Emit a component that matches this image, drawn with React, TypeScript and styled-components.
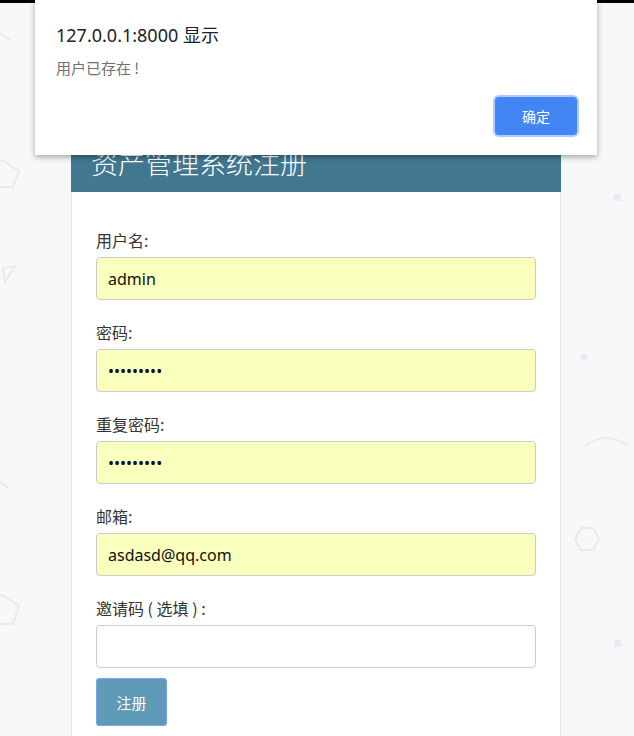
import React from 'react';
import styled, { createGlobalStyle } from 'styled-components';

const GlobalStyle = createGlobalStyle`
  html, body {
    margin: 0;
    padding: 0;
    background: #f7f8fa;
    font-family: "Noto Sans", "Noto Sans CJK SC", sans-serif;
  }
  * { box-sizing: border-box; }
`;

////////////////////// styled [START]
const Page = styled.div`
  position: relative;
  min-height: 736px;
  overflow: hidden;
`;

const TopBar = styled.div`
  height: 3px;
  background: #000;
`;

const Decor = styled.svg`
  position: absolute;
  inset: 0;
  width: 634px;
  height: 736px;
  pointer-events: none;
`;

const Main = styled.div`
  position: relative;
  display: flex;
  justify-content: center;
  padding: 117px 2px 0 0;
`;

const Card = styled.div`
  width: 490px;
  background: #fff;
`;

const CardHeader = styled.div`
  background: #41778f;
  padding: 27px 20px 13px;
`;

const Title = styled.h2`
  margin: 0;
  font-family: "Noto Sans CJK SC", sans-serif;
  font-size: 27px;
  font-weight: 300;
  line-height: 32px;
  color: #fff;
`;

const CardBody = styled.form`
  padding: 37px 24px 20px 24px;
  border: 1px solid #e6e8eb;
  border-top: none;
`;

const Group = styled.div`
  display: flex;
  flex-direction: column;
  margin-bottom: 21px;

  &:last-of-type {
    margin-bottom: 10px;
  }
`;

const Label = styled.label`
  font-family: "Noto Sans CJK SC", sans-serif;
  font-size: 16px;
  line-height: 22px;
  color: #333;
  margin-bottom: 6px;
`;

const Input = styled.input<{ $filled?: boolean }>`
  height: 43px;
  width: 100%;
  padding: 0 11px;
  border: 1px solid #ccc;
  border-radius: 4px;
  background: ${({ $filled }) => ($filled ? '#faffbd' : '#fff')};
  font-family: "Noto Sans", sans-serif;
  font-size: 16px;
  color: #111;
  outline: none;
`;

const Submit = styled.button`
  width: 71px;
  height: 48px;
  border: 1px solid #7aa6ee;
  border-radius: 3px;
  background: #5f9ab6;
  color: #fff;
  font-family: "Noto Sans CJK SC", sans-serif;
  font-size: 15px;
  cursor: pointer;
`;

const Dialog = styled.div`
  position: absolute;
  top: 0;
  left: 35px;
  width: 562px;
  height: 155px;
  background: #fff;
  box-shadow: 0 2px 6px rgba(0, 0, 0, 0.35);
  padding: 22px 20px 0 21px;
  display: flex;
  flex-direction: column;
`;

const DialogTitle = styled.div`
  font-family: "Noto Sans", "Noto Sans CJK SC", sans-serif;
  font-size: 18px;
  line-height: 26px;
  color: #202124;
`;

const DialogText = styled.div`
  margin-top: 9px;
  font-family: "Noto Sans CJK SC", sans-serif;
  font-size: 15px;
  line-height: 22px;
  color: #707070;
`;

const DialogActions = styled.div`
  display: flex;
  justify-content: flex-end;
  margin-top: 18px;
`;

const OkButton = styled.button`
  width: 82px;
  height: 38px;
  border: none;
  border-radius: 4px;
  background: #4285f4;
  box-shadow: 0 0 0 2px #aecbfa;
  color: #fff;
  font-family: "Noto Sans CJK SC", sans-serif;
  font-size: 14px;
`;
////////////////////// styled [END]

const fields = [
  { id: 'username', label: '用户名:', type: 'text', value: 'admin' },
  { id: 'password', label: '密码:', type: 'password', value: '123456789' },
  { id: 'password2', label: '重复密码:', type: 'password', value: '123456789' },
  { id: 'email', label: '邮箱:', type: 'text', value: 'asdasd@qq.com' },
  { id: 'invite', label: '邀请码 ( 选填 ) :', type: 'text', value: '' },
];

const Background: React.FC = () => (
  <Decor viewBox="0 0 634 736">
    <g fill="none" stroke="#e9eaed" strokeWidth="2">
      <path d="M-2 32 L10 40" />
      <polygon points="2,160 19,171 13,187 -4,187 -6,165" />
      <polygon points="3,268 15,266 5,282" />
      <path d="M-2 480 L8 488" />
      <polygon points="2,595 19,606 13,624 -4,624 -6,600" />
      <path d="M585 446 Q606 430 628 446" />
      <polygon points="575,539 581,528 593,528 599,539 593,550 581,550" />
    </g>
    <g fill="#eaebee">
      <rect x="614" y="194" width="7" height="7" />
      <circle cx="584" cy="357" r="3.5" />
      <rect x="614" y="640" width="7" height="7" />
    </g>
  </Decor>
);

const App: React.FC = () => {
  return (
    <Page>
      <GlobalStyle />
      <TopBar />
      <Background />
      <Main>
        <Card>
          <CardHeader>
            <Title>资产管理系统注册</Title>
          </CardHeader>
          <CardBody onSubmit={(e) => e.preventDefault()}>
            {fields.map((f) => (
              <Group key={f.id}>
                <Label htmlFor={f.id}>{f.label}</Label>
                <Input
                  id={f.id}
                  type={f.type}
                  defaultValue={f.value}
                  $filled={f.value !== ''}
                />
              </Group>
            ))}
            <Submit type="submit">注册</Submit>
          </CardBody>
        </Card>
      </Main>
      <Dialog>
        <DialogTitle>127.0.0.1:8000 显示</DialogTitle>
        <DialogText>用户已存在 !</DialogText>
        <DialogActions>
          <OkButton>确定</OkButton>
        </DialogActions>
      </Dialog>
    </Page>
  );
};

export default App;
